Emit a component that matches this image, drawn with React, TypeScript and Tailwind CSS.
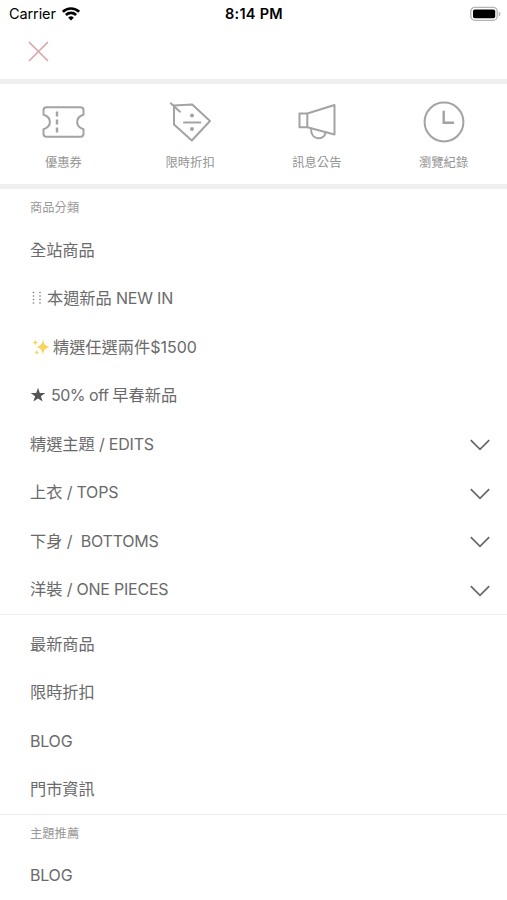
import type { ReactNode } from 'react';

const stroke = {
  fill: 'none',
  stroke: '#a3a3a3',
  strokeWidth: 2,
  strokeLinejoin: 'round' as const,
  strokeLinecap: 'round' as const,
};

function StatusBar() {
  return (
    <header className="grid h-7 grid-cols-3 items-center pr-[6px] pl-[9px] text-black">
      <div className="flex items-center gap-[6px]">
        <span className="text-[14.5px] leading-7 tracking-[-0.1px]">Carrier</span>
        <svg width="18" height="14" viewBox="0 0 18 14" fill="none" stroke="#000" strokeWidth="2.6">
          <path d="M0.9 4.8a11.6 11.6 0 0 1 16.2 0" />
          <path d="M3.9 8a7.3 7.3 0 0 1 10.2 0" />
          <path d="M9 13.6 6.2 10.7a4 4 0 0 1 5.6 0Z" fill="#000" stroke="none" />
        </svg>
      </div>
      <span className="pr-[2px] text-center text-[14.5px] leading-7 font-semibold tracking-[0.25px] whitespace-nowrap">8:14 PM</span>
      <svg className="justify-self-end" width="31" height="16" viewBox="0 0 31 16">
        <rect x="0.8" y="1.3" width="26.4" height="13" rx="4" fill="#fff" stroke="#b3b3b3" strokeWidth="1.3" />
        <rect x="3" y="3.5" width="22.2" height="8.8" rx="1.8" fill="#000" />
        <path d="M28.8 5.5v5c2.2-1 2.2-4 0-5Z" fill="#b3b3b3" />
      </svg>
    </header>
  );
}

function Ticket() {
  return (
    <svg width="44" height="44" viewBox="-1 0 44 44" {...stroke}>
      <path d="M4.5 7.3h34a3 3 0 0 1 3 3v4.5c-8.500 2.500-8.500 11.900 0 14.400v4.500a3 3 0 0 1-3 3h-34a3 3 0 0 1-3-3v-4.500c8.500-2.500 8.500-11.900 0-14.400v-4.500a3 3 0 0 1 3-3Z" />
      <path d="M15 11.500v5M15 19.500v5M15 27.500v5" strokeWidth="2.400" strokeLinecap="butt" />
    </svg>
  );
}

function Tag() {
  return (
    <svg width="44" height="44" viewBox="0 0 44 44" {...stroke}>
      <path d="M6 5.600 24.300 4.600 42 21 23.800 40.500 6 24.500Z" />
      <path d="M2.800 3.300 12 11.700M16 22.500H32.300" />
      <circle cx="24" cy="15.500" r="2" fill="#a3a3a3" stroke="none" />
      <circle cx="24" cy="29" r="2" fill="#a3a3a3" stroke="none" />
    </svg>
  );
}

function Megaphone() {
  return (
    <svg width="44" height="44" viewBox="0 0 44 44" {...stroke}>
      <path d="M4.500 13.500h7.800v13.800H4.500ZM12.300 13.500 39.500 5v29.500L12.300 27.300" />
      <path d="M16 28.500c-.3 12.700 13.700 12.200 14.500 3.800" />
    </svg>
  );
}

function Clock() {
  return (
    <svg width="44" height="44" viewBox="0 0 44 44" {...stroke}>
      <circle cx="22" cy="22" r="19.400" />
      <path d="M21.700 10.800V22.700H32" strokeWidth="2.400" strokeLinecap="butt" strokeLinejoin="miter" />
    </svg>
  );
}

function Shortcut({ icon, label }: { icon: ReactNode; label: string }) {
  return (
    <button className="flex flex-col items-center pt-4">
      {icon}
      <span className="mt-[10px] text-[12.3px] leading-[18px] text-[#939393]">{label}</span>
    </button>
  );
}

function Row({ children, expandable = false }: { children: ReactNode; expandable?: boolean }) {
  return (
    <li className="flex h-[48.5px] items-center justify-between pr-[17px] pl-[30px] text-[16.2px] leading-6 whitespace-pre text-[#6a6a6a]">
      <span className="flex items-center">{children}</span>
      {expandable && (
        <svg className="mt-[3px]" width="20" height="12" viewBox="0 0 20 12" fill="none" stroke="#666" strokeWidth="1.7">
          <path d="m.8 1.200 9.200 9.100 9.200-9.100" />
        </svg>
      )}
    </li>
  );
}

function Latin({ children }: { children: string }) {
  return <span className="text-[16px] tracking-[-0.22px]">{children}</span>;
}

function Dots() {
  return (
    <svg className="mr-[5px] ml-[2px]" width="10" height="14" viewBox="0 0 10 14" fill="#777">
      {[1.5, 5, 8.5, 12].map((y) => (
        <g key={y}>
          <circle cx="1.500" cy={y} r=".8" />
          <circle cx="8" cy={y} r=".8" />
        </g>
      ))}
    </svg>
  );
}

function Sparkles() {
  return (
    <svg className="mr-[3px] ml-[2px]" width="18" height="18" viewBox="0 0 18 18" fill="#f9d45c">
      <path d="M11 1.200c.9 5 2.200 6.600 6.700 7.800-4.500 1.200-5.800 2.800-6.700 7.800-.9-5-2.200-6.600-6.700-7.800 4.500-1.200 5.800-2.800 6.700-7.800Z" />
      <path d="M3.300 1.500c.4 2 1 2.600 3 3.100-2 .5-2.600 1.100-3 3.100-.4-2-1-2.600-3-3.100 2-.5 2.600-1.100 3-3.100ZM4.800 11.800c.3 1.700.8 2.200 2.500 2.600-1.700.4-2.200.9-2.500 2.600-.3-1.700-.8-2.200-2.500-2.600 1.700-.4 2.200-.9 2.500-2.600Z" />
    </svg>
  );
}

function Star() {
  return (
    <svg className="mr-[5px]" width="16" height="16" viewBox="0 0 16 16" fill="#555">
      <path d="m8 .8 1.800 5.200h5.500l-4.400 3.300 1.700 5.300L8 11.400l-4.600 3.200 1.700-5.300L.7 6h5.500Z" />
    </svg>
  );
}

export default function App() {
  return (
    <main className="h-[900px] w-full overflow-hidden bg-white font-['Inter','Noto_Sans_CJK_TC',sans-serif]">
      <StatusBar />
      <div className="flex h-[51px] items-center pb-[4px] pl-[28px]">
        <button aria-label="Close">
          <svg width="21" height="21" viewBox="0 0 21 21" stroke="#dba6ab" strokeWidth="1.700" strokeLinecap="round">
            <path d="m1.500 1.500 18 18m0-18-18 18" />
          </svg>
        </button>
      </div>
      <nav className="grid h-[110px] grid-cols-4 items-start border-y-[5px] border-[#efefef]">
        <Shortcut icon={<Ticket />} label="優惠券" />
        <Shortcut icon={<Tag />} label="限時折扣" />
        <Shortcut icon={<Megaphone />} label="訊息公告" />
        <Shortcut icon={<Clock />} label="瀏覽紀錄" />
      </nav>
      <section className="border-b border-[#f0f0f0]">
        <h2 className="h-[36.500px] pt-[9px] pl-[30px] text-[12.300px] leading-5 font-normal text-[#999]">商品分類</h2>
        <ul>
          <Row>全站商品</Row>
          <Row><Dots />本週新品<Latin>{' NEW IN'}</Latin></Row>
          <Row><Sparkles />精選任選兩件<span className="text-[16px]">$1500</span></Row>
          <Row><Star /><span className="text-[16px] tracking-[-0.5px]">{'50% off '}</span>早春新品</Row>
          <Row expandable>精選主題<Latin>{' / EDITS'}</Latin></Row>
          <Row expandable>上衣<Latin>{' / TOPS'}</Latin></Row>
          <Row expandable>下身<Latin>{' /  BOTTOMS'}</Latin></Row>
          <Row expandable>洋裝<Latin>{' / ONE PIECES'}</Latin></Row>
        </ul>
      </section>
      <section className="border-b border-[#ebebeb] pt-[5px]">
        <ul>
          <Row>最新商品</Row>
          <Row>限時折扣</Row>
          <Row><Latin>BLOG</Latin></Row>
          <Row>門市資訊</Row>
        </ul>
      </section>
      <section>
        <h2 className="h-[36.500px] pt-[9px] pl-[30px] text-[12.300px] leading-5 font-normal text-[#999]">主題推薦</h2>
        <ul>
          <Row><Latin>BLOG</Latin></Row>
        </ul>
      </section>
    </main>
  );
}
